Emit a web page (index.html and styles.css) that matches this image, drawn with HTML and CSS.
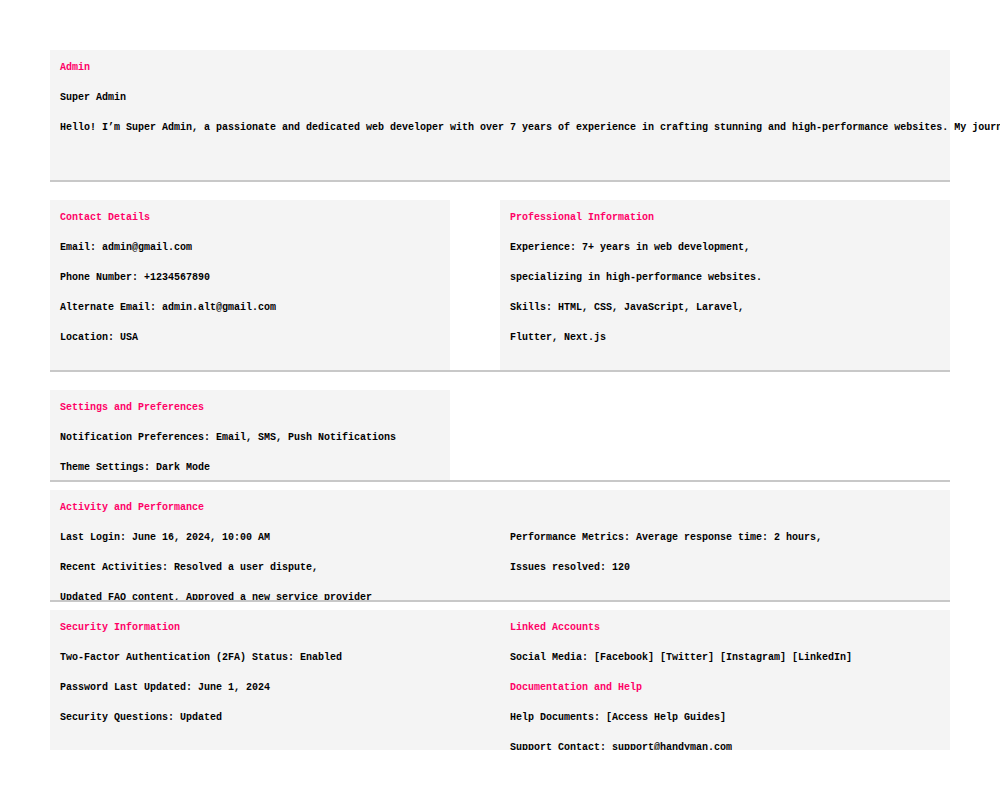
FILE: index.html
```html
<!DOCTYPE html>
<html lang="en">
<head>
<meta charset="utf-8">
<title>Admin Profile</title>
<link rel="stylesheet" href="styles.css">
</head>
<body>
<div class="page">
  <section class="row row-intro">
    <div class="card card-full">
      <p class="title">Admin</p>
      <p>Super Admin</p>
      <p class="nowrap">Hello! I’m Super Admin, a passionate and dedicated web developer with over 7 years of experience in crafting stunning and high-performance websites. My journey in web development began with a love for design and code.</p>
    </div>
  </section>

  <section class="row row-contact">
    <div class="card card-left">
      <p class="title">Contact Details</p>
      <p>Email: admin@gmail.com</p>
      <p>Phone Number: +1234567890</p>
      <p>Alternate Email: admin.alt@gmail.com</p>
      <p>Location: USA</p>
    </div>
    <div class="card card-right">
      <p class="title">Professional Information</p>
      <p>Experience: 7+ years in web development,</p>
      <p>specializing in high-performance websites.</p>
      <p>Skills: HTML, CSS, JavaScript, Laravel,</p>
      <p>Flutter, Next.js</p>
    </div>
  </section>

  <section class="row row-settings">
    <div class="card card-left">
      <p class="title">Settings and Preferences</p>
      <p>Notification Preferences: Email, SMS, Push Notifications</p>
      <p>Theme Settings: Dark Mode</p>
    </div>
  </section>

  <section class="row row-activity clip">
    <div class="card card-full">
      <p class="title">Activity and Performance</p>
      <div class="cols">
        <div class="col">
          <p>Last Login: June 16, 2024, 10:00 AM</p>
          <p>Recent Activities: Resolved a user dispute,</p>
          <p>Updated FAQ content, Approved a new service provider</p>
        </div>
        <div class="col">
          <p>Performance Metrics: Average response time: 2 hours,</p>
          <p>Issues resolved: 120</p>
        </div>
      </div>
    </div>
  </section>

  <section class="row row-security clip">
    <div class="card card-full">
      <div class="cols">
        <div class="col">
          <p class="title">Security Information</p>
          <p>Two-Factor Authentication (2FA) Status: Enabled</p>
          <p>Password Last Updated: June 1, 2024</p>
          <p>Security Questions: Updated</p>
        </div>
        <div class="col">
          <p class="title">Linked Accounts</p>
          <p>Social Media: [Facebook] [Twitter] [Instagram] [LinkedIn]</p>
          <p class="title">Documentation and Help</p>
          <p>Help Documents: [Access Help Guides]</p>
          <p>Support Contact: support@handyman.com</p>
        </div>
      </div>
    </div>
  </section>
</div>
</body>
</html>
```
FILE: styles.css
```css
html {
  overflow-x: hidden;
}

body {
  margin: 0;
  background: #ffffff;
  color: #000000;
  font-family: "Liberation Mono", "Courier New", monospace;
  font-size: 10px;
  font-weight: bold;
}

.page {
  width: 900px;
  padding: 50px 0 0 50px;
}

.row {
  display: flex;
  gap: 50px;
  box-sizing: content-box;
  border-bottom: 2px solid #c8c8c8;
}

.row-intro {
  height: 130px;
  margin-bottom: 18px;
}

.row-contact {
  height: 170px;
  margin-bottom: 18px;
}

.row-settings {
  height: 90px;
  margin-bottom: 8px;
}

.row-activity {
  height: 110px;
  margin-bottom: 8px;
}

.row-security {
  height: 140px;
  border-bottom: none;
}

.clip {
  overflow: hidden;
}

.card {
  background: #f4f4f4;
  padding: 12px 10px 8px;
  box-sizing: border-box;
  min-width: 0;
}

.card-full {
  flex: 1;
}

.card-left {
  width: 400px;
  flex: none;
}

.card-right {
  flex: 1;
}

.cols {
  display: grid;
  grid-template-columns: 450px 1fr;
}

p {
  margin: 0 0 18px;
  line-height: 12px;
}

.title {
  color: #ff0066;
}

.nowrap {
  white-space: nowrap;
}
```
